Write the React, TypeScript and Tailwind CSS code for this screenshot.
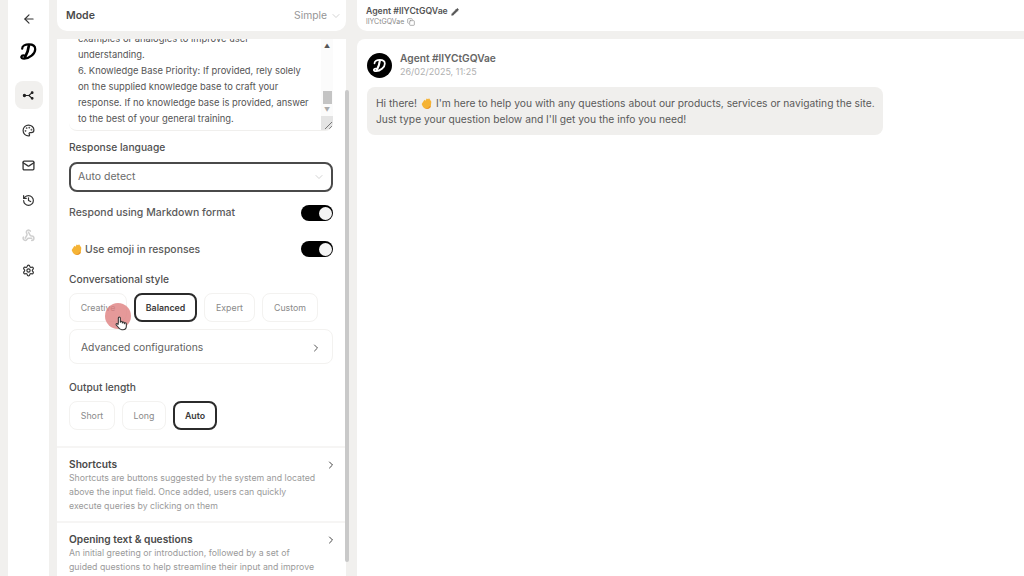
import React from "react";
import { ArrowLeft, Palette, Mail, History, Webhook, Settings, ChevronDown, ChevronRight, Pencil, Copy } from "lucide-react";

function Logo({ className, color = "#000" }: { className?: string; color?: string }) {
  return (
    <svg viewBox="0 0 24 24" className={className} fill="none" stroke={color} strokeLinecap="round" strokeLinejoin="round">
      <path d="M4 8.5C4 5 8 3 12.5 3C17.5 3 20.5 5.5 20.5 9C20.5 15 13 21 6.5 21C4 21 2.5 20 3 18.5C3.6 17 6 16.8 8 17.5" strokeWidth="2.8" />
      <path d="M12.5 4.5C12 9 10.5 14 7.5 19.5" strokeWidth="3.4" />
    </svg>
  );
}

function ShareIcon() {
  return (
    <svg viewBox="0 0 16 16" className="w-[13px] h-[13px]" fill="none" stroke="#222" strokeWidth="1.5" strokeLinecap="round">
      <path d="M3 8H8.5L12.5 4.5M8.5 8L12.5 11.5" />
      <circle cx="3" cy="8" r="1.3" fill="#222" />
      <circle cx="12.5" cy="4.5" r="1" fill="#222" />
      <circle cx="12.5" cy="11.5" r="1" fill="#222" />
    </svg>
  );
}

function Hand({ className }: { className?: string }) {
  return (
    <svg viewBox="2.5 2.5 11.5 12" className={className}>
      <path d="M3 9L6 4.5L7 5.5L8.5 3L10 3.8L11 2.8L12 4L13.5 6.5L13 11.5C12.2 14 9 15 6.5 14C4.8 13.2 3.8 11 3 9Z" fill="#f5b335" />
      <path d="M6.5 14C8 14.3 10.5 13.5 11.5 11.5L13 11.5C12.2 14 9 15 6.5 14Z" fill="#e8912c" />
    </svg>
  );
}

function Toggle() {
  return (
    <div className="w-[32px] h-[16px] rounded-full bg-black flex items-center justify-end pr-[1px]">
      <div className="w-[13px] h-[13px] rounded-full bg-[#f4f4f4]" />
    </div>
  );
}

function Chip({ label, active, w }: { label: string; active?: boolean; w: string }) {
  return active ? (
    <div className={`${w} h-[29px] rounded-[8px] border-2 border-[#2b2b2b] flex items-center justify-center text-[8.8px] font-semibold text-[#3a3a3a]`}>{label}</div>
  ) : (
    <div className={`${w} h-[29px] rounded-[8px] border border-[#f3f2f0] flex items-center justify-center text-[8.8px] text-[#8a8a8a]`}>{label}</div>
  );
}

function Section({ title, children }: { title: string; children: React.ReactNode }) {
  return (
    <div className="pl-3 pr-[13px] pt-[10px] pb-[8px] border-t-2 border-[#f6f5f4]">
      <div className="flex items-center justify-between h-[14px]">
        <div className="text-[10.2px] font-semibold text-[#4a4a4a]">{title}</div>
        <ChevronRight className="w-[12px] h-[12px] text-[#444] mr-[-4px]" strokeWidth={2} />
      </div>
      <div className="-mt-[1px] text-[8.75px] leading-[14px] text-[#9a9a9a] whitespace-nowrap">{children}</div>
    </div>
  );
}

export default function App() {
  const rail = "w-[28px] h-[28px] flex items-center justify-center";
  return (
    <div className="w-[1024px] h-[576px] overflow-hidden flex bg-[#f1f0ee] relative font-['Inter',sans-serif]">
      <div className="ml-2 w-[41px] h-full bg-white flex flex-col items-center">
        <div className={`${rail} mt-[5px]`}><ArrowLeft className="w-[14px] h-[14px] text-[#333] ml-[1px]" strokeWidth={2} /></div>
        <div className={`${rail} mt-[4px]`}><Logo className="w-[19px] h-[19px]" /></div>
        <div className={`${rail} mt-[16px] rounded-[8px] bg-[#f1f0ee]`}><ShareIcon /></div>
        <div className={`${rail} mt-[7px]`}><Palette className="w-[13px] h-[13px] text-[#333]" strokeWidth={2.2} /></div>
        <div className={`${rail} mt-[7px]`}><Mail className="w-[13px] h-[13px] text-[#333]" strokeWidth={2.4} /></div>
        <div className={`${rail} mt-[7px]`}><History className="w-[13px] h-[13px] text-[#333]" strokeWidth={2.2} /></div>
        <div className={`${rail} mt-[7px]`}><Webhook className="w-[13px] h-[13px] text-[#cfcfcf]" strokeWidth={2.8} /></div>
        <div className={`${rail} mt-[7px]`}><Settings className="w-[13px] h-[13px] text-[#333]" strokeWidth={2.2} /></div>
      </div>

      <div className="ml-2 w-[289px] h-full flex flex-col gap-2">
        <div className="h-[31px] shrink-0 bg-white rounded-b-[10px] flex items-center justify-between pl-[9px] pr-[4px]">
          <div className="text-[10.5px] font-semibold text-[#4a4a4a]">Mode</div>
          <div className="flex items-center gap-[3px] text-[10.3px] text-[#969696]">Simple<ChevronDown className="w-[12px] h-[12px] text-[#c4c4c4]" strokeWidth={1.5} /></div>
        </div>
        <div className="flex-1 bg-white overflow-hidden">
          <div className="pl-3 pr-[13px]">
            <div className="h-[92px] rounded-b-[8px] border-b border-[#f0efed] overflow-hidden flex">
              <div className="flex-1 pl-[9px] pr-1 text-[9.4px] leading-[16px] text-[#555] overflow-hidden whitespace-nowrap">
                <div className="-mt-[8px]">examples or analogies to improve user</div>
                <div>understanding.</div>
                <div>6. Knowledge Base Priority: If provided, rely solely</div>
                <div>on the supplied knowledge base to craft your</div>
                <div>response. If no knowledge base is provided, answer</div>
                <div>to the best of your general training.</div>
              </div>
              <div className="w-[12px] flex flex-col items-center bg-[#fbfbfb]">
                <div className="text-[6px] leading-[6px] mt-[4px] text-[#555]">▲</div>
                <div className="w-[9px] h-[13px] mt-[42px] bg-[#c4c4c4]" />
                <div className="text-[6px] leading-[6px] mt-[3px] text-[#aaa]">▼</div>
                <div className="w-full flex-1 mt-[3px] bg-[#e4e4e4] flex items-end justify-end">
                  <svg viewBox="0 0 12 12" className="w-[12px] h-[12px]" stroke="#777" strokeWidth="1"><path d="M4 11L11 4M8 11L11 8" /></svg>
                </div>
              </div>
            </div>

            <div className="mt-[9px] text-[10.25px] leading-[14px] font-medium text-[#4f4f4f]">Response language</div>
            <div className="mt-[8px] h-[30px] rounded-[8px] border-2 border-[#4a4a4a] flex items-center justify-between pl-[7px] pr-[6px] text-[10.5px] text-[#6a6a6a]">
              Auto detect<ChevronDown className="w-[12px] h-[12px] text-[#c4c4c4]" strokeWidth={1.5} />
            </div>

            <div className="mt-[13px] h-[16px] flex items-center justify-between text-[10.5px] font-medium text-[#5a5a5a]">
              Respond using Markdown format<Toggle />
            </div>
            <div className="mt-[20px] h-[16px] flex items-center justify-between text-[10.4px] font-medium text-[#5a5a5a]">
              <div className="flex items-center gap-[3px] pl-[2px] pt-[1px]"><Hand className="w-[11px] h-[11px]" />Use emoji in responses</div><Toggle />
            </div>

            <div className="mt-[15px] h-[14px] text-[10.25px] leading-[14px] font-medium text-[#4f4f4f]">Conversational style</div>
            <div className="mt-[7px] flex">
              <Chip label="Creative" w="w-[58px]" />
              <div className="ml-[7px]"><Chip label="Balanced" active w="w-[63px]" /></div>
              <div className="ml-[7px]"><Chip label="Expert" w="w-[51px]" /></div>
              <div className="ml-[7px]"><Chip label="Custom" w="w-[56px]" /></div>
            </div>
            <div className="mt-[7px] h-[35px] pt-[2px] rounded-[8px] border border-[#f3f2f0] flex items-center justify-between pl-[11px] pr-[10px] text-[10.3px] text-[#5f5f5f]">
              Advanced configurations<ChevronRight className="w-[12px] h-[12px] text-[#555]" strokeWidth={2} />
            </div>

            <div className="mt-[16px] h-[14px] text-[10.25px] leading-[14px] font-medium text-[#4f4f4f]">Output length</div>
            <div className="mt-[7px] flex">
              <Chip label="Short" w="w-[46px]" />
              <div className="ml-[7px]"><Chip label="Long" w="w-[44px]" /></div>
              <div className="ml-[7px]"><Chip label="Auto" active w="w-[44px]" /></div>
            </div>
          </div>
          <div className="mt-[16px]">
            <Section title="Shortcuts">
              Shortcuts are buttons suggested by the system and located<br />
              above the input field. Once added, users can quickly<br />
              execute queries by clicking on them
            </Section>
            <Section title="Opening text & questions">
              An initial greeting or introduction, followed by a set of<br />
              guided questions to help streamline their input and improve
            </Section>
          </div>
        </div>
      </div>

      <div className="w-[4px] h-full flex flex-col -ml-[1px] relative">
        <div className="mt-[90px] h-[472px] bg-[#c9c9c9] rounded-full" />
      </div>

      <div className="ml-[8px] flex-1 h-full flex flex-col gap-2">
        <div className="h-[31px] shrink-0 bg-white rounded-bl-[10px] pl-[9px] pt-[6px]">
          <div className="flex items-center gap-[3px] text-[8.7px] leading-[11px] font-semibold text-[#555]">Agent #lIYCtGQVae<Pencil className="w-[8px] h-[8px] text-[#555] fill-[#555]" /></div>
          <div className="flex items-center gap-[3px] text-[7px] leading-[9px] text-[#8a8a8a]">lIYCtGQVae<Copy className="w-[8px] h-[8px]" /></div>
        </div>
        <div className="flex-1 bg-white rounded-tl-[8px] pl-[10px] pt-[12px]">
          <div className="flex items-center gap-[8px]">
            <div className="w-[25px] h-[25px] rounded-full bg-black flex items-center justify-center"><Logo className="w-[15px] h-[15px]" color="#fff" /></div>
            <div>
              <div className="text-[10.2px] leading-[14px] font-semibold text-[#666]">Agent #lIYCtGQVae</div>
              <div className="text-[9px] leading-[14px] text-[#b0b0b0]">26/02/2025, 11:25</div>
            </div>
          </div>
          <div className="mt-[8px] w-[516px] h-[48px] rounded-[8px] bg-[#f0efed] pl-[9px] pt-[8px] text-[10.25px] leading-[16px] text-[#5a5a5a] whitespace-nowrap">
            <div className="flex items-center">Hi there!<Hand className="w-[11px] h-[11px] mx-[4px]" />I'm here to help you with any questions about our products, services or navigating the site.</div>
            <div>Just type your question below and I'll get you the info you need!</div>
          </div>
        </div>
      </div>

      <div className="absolute left-[105px] top-[303px] w-[26px] h-[26px] rounded-full bg-[#df7f7f] opacity-80" />
      <svg viewBox="0 0 24 24" className="absolute left-[113px] top-[315px] w-[16px] h-[16px]" fill="#fff" stroke="#333" strokeWidth="1.6" strokeLinejoin="round">
        <path d="M8 13V4.5a1.5 1.5 0 0 1 3 0V11a1.5 1.5 0 0 1 3 0v1a1.5 1.5 0 0 1 3 0v1a1.5 1.5 0 0 1 3 0v4c0 3-2 5-5 5h-2c-3 0-4-1.5-5.5-4L4.8 15c-.8-1.5 1-2.8 2.2-1.5L8 15" />
      </svg>
    </div>
  );
}
